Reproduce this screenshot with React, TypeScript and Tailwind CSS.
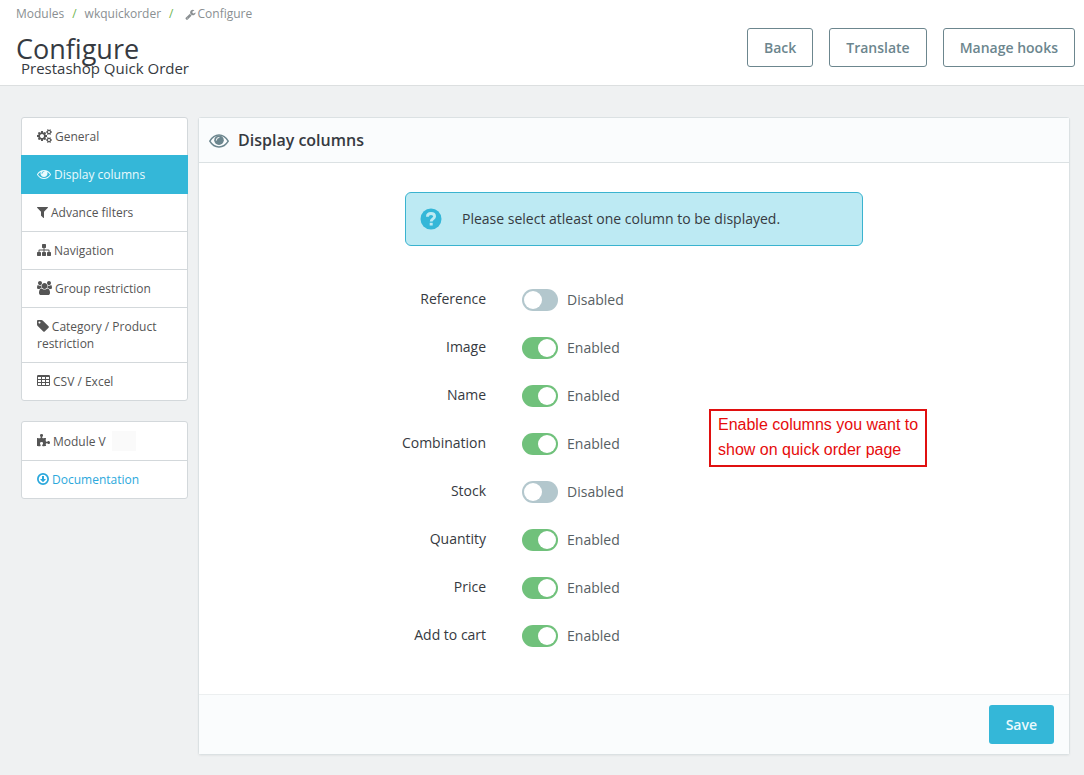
import React from "react";

type IconDef = { width: number; path: string };

const icons: Record<string, IconDef> = {
  wrench: {
    width: 1792,
    path: "M448 1472q0-26-19-45t-45-19-45 19-19 45 19 45 45 19 45-19 19-45zm644-420l-682 682q-37 37-90 37-52 0-91-37l-106-108q-38-36-38-90 0-53 38-91l681-681q39 98 114.5 173.5t173.5 114.5zm634-435q0 39-23 106-47 134-164.5 217.5t-258.5 83.5q-185 0-316.5-131.5t-131.5-316.5 131.5-316.5 316.5-131.5q58 0 121.5 16.5t107.5 46.5q16 11 16 28t-16 28l-293 169v224l193 107q5-3 79-48.5t135.5-81 70.5-35.5q15 0 23.5 10t8.5 25z",
  },
  cogs: {
    width: 1920,
    path: "M896 896q0-106-75-181t-181-75-181 75-75 181 75 181 181 75 181-75 75-181zm768 512q0-52-38-90t-90-38-90 38-38 90q0 53 37.5 90.5t90.5 37.5 90.5-37.5 37.5-90.5zm0-1024q0-52-38-90t-90-38-90 38-38 90q0 53 37.5 90.5t90.5 37.5 90.5-37.5 37.5-90.5zm-384 421v185q0 10-7 19.5t-16 10.5l-155 24q-11 35-32 76 34 48 90 115 7 11 7 20 0 12-7 19-23 30-82.5 89.5t-78.5 59.5q-11 0-21-7l-115-90q-37 19-77 31-11 108-23 155-7 24-30 24h-186q-11 0-20-7.5t-10-17.5l-23-153q-34-10-75-31l-118 89q-7 7-20 7-11 0-21-8-144-133-144-160 0-9 7-19 10-14 41-53t47-61q-23-44-35-82l-152-24q-10-1-17-9.5t-7-19.5v-185q0-10 7-19.5t16-10.5l155-24q11-35 32-76-34-48-90-115-7-11-7-20 0-12 7-20 22-30 82-89t79-59q11 0 21 7l115 90q34-18 77-32 11-108 23-154 7-24 30-24h186q11 0 20 7.5t10 17.5l23 153q34 10 75 31l118-89q8-7 20-7 11 0 21 8 144 133 144 160 0 8-7 19-12 16-42 54t-45 60q23 48 34 82l152 23q10 2 17 10.5t7 19.5zm640 533v140q0 16-149 31-12 27-30 52 51 113 51 138 0 4-4 7-122 71-124 71-8 0-46-47t-52-68q-20 2-30 2t-30-2q-14 21-52 68t-46 47q-2 0-124-71-4-3-4-7 0-25 51-138-18-25-30-52-149-15-149-31v-140q0-16 149-31 13-29 30-52-51-113-51-138 0-4 4-7 4-2 35-20t59-34 30-16q8 0 46 46.5t52 67.5q20-2 30-2t30 2q51-71 92-112l6-2q4 0 124 70 4 3 4 7 0 25-51 138 17 23 30 52 149 15 149 31zm0-1024v140q0 16-149 31-12 27-30 52 51 113 51 138 0 4-4 7-122 71-124 71-8 0-46-47t-52-68q-20 2-30 2t-30-2q-14 21-52 68t-46 47q-2 0-124-71-4-3-4-7 0-25 51-138-18-25-30-52-149-15-149-31v-140q0-16 149-31 13-29 30-52-51-113-51-138 0-4 4-7 4-2 35-20t59-34 30-16q8 0 46 46.5t52 67.5q20-2 30-2t30 2q51-71 92-112l6-2q4 0 124 70 4 3 4 7 0 25-51 138 17 23 30 52 149 15 149 31z",
  },
  eye: {
    width: 1792,
    path: "M1664 960q-152-236-381-353 61 104 61 225 0 185-131.5 316.5t-316.5 131.5-316.5-131.5-131.5-316.5q0-121 61-225-229 117-381 353 133 205 333.5 326.5t434.5 121.5 434.5-121.5 333.5-326.5zm-720-384q0-20-14-34t-34-14q-125 0-214.5 89.5t-89.5 214.5q0 20 14 34t34 14 34-14 14-34q0-86 61-147t147-61q20 0 34-14t14-34zm848 384q0 34-20 69-140 230-376.5 368.5t-499.5 138.5-499.5-139-376.5-368q-20-35-20-69t20-69q140-229 376.5-368t499.5-139 499.5 139 376.5 368q20 35 20 69z",
  },
  filter: {
    width: 1408,
    path: "M1403 295q17 41-14 70l-493 493v742q0 42-39 59-13 5-25 5-27 0-45-19l-256-256q-19-19-19-45v-486l-493-493q-31-29-14-70 17-39 59-39h1280q42 0 59 39z",
  },
  sitemap: {
    width: 1792,
    path: "M1792 1248v320q0 40-28 68t-68 28h-320q-40 0-68-28t-28-68v-320q0-40 28-68t68-28h96v-192h-512v192h96q40 0 68 28t28 68v320q0 40-28 68t-68 28h-320q-40 0-68-28t-28-68v-320q0-40 28-68t68-28h96v-192h-512v192h96q40 0 68 28t28 68v320q0 40-28 68t-68 28h-320q-40 0-68-28t-28-68v-320q0-40 28-68t68-28h96v-192q0-52 38-90t90-38h512v-192h-96q-40 0-68-28t-28-68v-320q0-40 28-68t68-28h320q40 0 68 28t28 68v320q0 40-28 68t-68 28h-96v192h512q52 0 90 38t38 90v192h96q40 0 68 28t28 68z",
  },
  group: {
    width: 1920,
    path: "M593 896q-162 5-265 128h-134q-82 0-138-40.5t-56-118.5q0-353 124-353 6 0 43.5 21t97.5 42.5 119 21.5q67 0 133-23-5 37-5 66 0 139 81 256zm1071 637q0 120-73 189.5t-194 69.5h-874q-121 0-194-69.5t-73-189.5q0-53 3.5-103.5t14-109 26.5-108.5 43-97.5 62-81 85.5-53.5 111.5-20q10 0 43 21.5t73 48 107 48 135 21.5 135-21.5 107-48 73-48 43-21.5q61 0 111.5 20t85.5 53.5 62 81 43 97.5 26.5 108.5 14 109 3.5 103.5zm-1024-1277q0 106-75 181t-181 75-181-75-75-181 75-181 181-75 181 75 75 181zm704 384q0 159-112.5 271.5t-271.5 112.5-271.5-112.5-112.5-271.5 112.5-271.5 271.5-112.5 271.5 112.5 112.5 271.5zm576 225q0 78-56 118.5t-138 40.5h-134q-103-123-265-128 81-117 81-256 0-29-5-66 66 23 133 23 59 0 119-21.5t97.5-42.5 43.5-21q124 0 124 353zm-128-609q0 106-75 181t-181 75-181-75-75-181 75-181 181-75 181 75 75 181z",
  },
  tag: {
    width: 1515,
    path: "M448 448q0-53-37.5-90.5t-90.5-37.5-90.5 37.5-37.5 90.5 37.5 90.5 90.5 37.5 90.5-37.5 37.5-90.5zm1067 576q0 53-37 90l-491 492q-39 37-91 37-53 0-90-37l-715-716q-38-37-64.5-101t-26.5-117v-416q0-52 38-90t90-38h416q53 0 117 26.5t102 64.5l715 714q37 39 37 91z",
  },
  table: {
    width: 1664,
    path: "M160 128h1344a160 160 0 0 1 160 160v1088a160 160 0 0 1-160 160H160a160 160 0 0 1-160-160V288a160 160 0 0 1 160-160zM128 384v256h384V384zM640 384v256h384V384zM1152 384v256h384V384zM128 768v256h384V768zM640 768v256h384V768zM1152 768v256h384V768zM128 1152v256h384v-256zM640 1152v256h384v-256zM1152 1152v256h384v-256z",
  },
  puzzle: {
    width: 1664,
    path: "M1664 1098q0 81-44.5 135t-123.5 54q-41 0-77.5-17.5t-59-38-56.5-38-71-17.5q-110 0-110 124 0 39 16 115t15 115v5q-22 0-33 1-34 3-97.5 11.5t-115.5 13.5-98 5q-61 0-103-26.5t-42-83.5q0-37 17.5-71t38-56.5 38-59 17.5-77.5q0-79-54-123.5t-135-44.5q-84 0-143 45.5t-59 127.5q0 43 15 83t33.5 64.5 33.5 53 15 50.5q0 45-46 89-37 35-117 35-95 0-245-24-9-2-27.5-4t-27.5-4l-13-2q-1 0-3-1-2 0-2-1v-1024q2 1 17.5 3.5t34 5 21.5 3.5q150 24 245 24 80 0 117-35 46-44 46-89 0-22-15-50.5t-33.5-53-33.5-64.5-15-83q0-82 59-127.5t144-45.5q80 0 134 44.5t54 123.5q0 41-17.5 77.5t-38 59-38 56.5-17.5 71q0 57 42 83.5t103 26.5q64 0 180-15t163-17v2q-1 2-3.5 17.5t-5 34-3.5 21.5q-24 150-24 245 0 80 35 117 44 46 89 46 22 0 50.5-15t53-33.5 64.5-33.5 83-15q82 0 127.5 59t45.5 143z",
  },
  download: {
    width: 1536,
    path: "M1120 928q0 12-10 24l-319 319q-11 9-23 9t-23-9l-320-320q-15-16-7-35 8-20 30-20h192v-352q0-14 9-23t23-9h192q14 0 23 9t9 23v352h192q14 0 23 9t9 23zM768 352a544 544 0 1 0 0 1088a544 544 0 1 0 0-1088zM768 128a768 768 0 1 1 0 1536a768 768 0 1 1 0-1536z",
  },
};

function Icon({ name, size = 14, className = "" }: { name: string; size?: number; className?: string }) {
  const icon = icons[name];
  return (
    <svg
      aria-hidden="true"
      viewBox={`0 0 ${icon.width} 1792`}
      height={size}
      width={(size * icon.width) / 1792}
      fill="currentColor"
      fillRule="evenodd"
      className={`inline-block ${className}`}
    >
      <path d={icon.path} />
    </svg>
  );
}

function EyeIcon() {
  return (
    <svg aria-hidden="true" viewBox="0 0 20 14" className="mt-0.5 h-3.5 w-5 text-[#6c868e]" fill="none">
      <path
        d="M.8 7.2C3 3.300 6.200 1 10 1s7 2.300 9.200 6.200C17 10.900 13.800 13 10 13S3 10.900.8 7.200z"
        stroke="currentColor"
        strokeWidth="1.500"
      />
      <circle cx="10" cy="6.200" r="4.800" fill="currentColor" />
      <path d="M7.300 6.200A2.700 2.700 0 0 1 10 3.400" stroke="#fafcfd" strokeWidth="1" strokeLinecap="round" />
    </svg>
  );
}

function HelpIcon() {
  return (
    <svg aria-hidden="true" viewBox="0 0 22 22" className="size-[22px]" fill="none">
      <circle cx="11" cy="11" r="10.500" fill="#34b7d8" />
      <path
        d="M7.400 8.700C7.400 6.600 9 5.500 11 5.500s3.600 1.200 3.600 3c0 2.300-3.400 2.500-3.400 5"
        stroke="#bdeaf3"
        strokeWidth="2.800"
      />
      <rect x="9.700" y="14.800" width="3" height="2.700" fill="#bdeaf3" />
    </svg>
  );
}

const menu = [
  { icon: "cogs", label: "General" },
  { icon: "eye", label: "Display columns", active: true },
  { icon: "filter", label: "Advance filters" },
  { icon: "sitemap", label: "Navigation", divided: true },
  { icon: "group", label: "Group restriction", divided: true },
  { icon: "tag", label: "Category / Product restriction", divided: true },
  { icon: "table", label: "CSV / Excel", divided: true },
];

const columns = [
  { id: "reference", label: "Reference", on: false },
  { id: "image", label: "Image", on: true },
  { id: "name", label: "Name", on: true },
  { id: "combination", label: "Combination", on: true },
  { id: "stock", label: "Stock", on: false },
  { id: "quantity", label: "Quantity", on: true },
  { id: "price", label: "Price", on: true },
  { id: "cart", label: "Add to cart", on: true },
];

function menuClass(active?: boolean, divided?: boolean) {
  if (active) return "-mx-px block bg-[#34b7d8] px-4 py-[11px] text-[#eafafd]";
  if (divided) return "block border-t border-[#d3d8db] px-[15px] py-2.5";
  return "block px-[15px] py-2.5";
}

function ColumnSwitch({ id, label, on }: { id: string; label: string; on: boolean }) {
  const [enabled, setEnabled] = React.useState(on);
  return (
    <div className="flex h-12 items-center">
      <label htmlFor={id} className="w-[33%] pb-0.5 text-right text-[#363a41]">
        {label}
      </label>
      <input
        id={id}
        type="checkbox"
        role="switch"
        checked={enabled}
        onChange={(e) => setEnabled(e.target.checked)}
        className="ml-9 h-[22px] w-9 appearance-none rounded-full bg-[#b3c7cd] p-0.5 before:block before:size-[18px] before:rounded-full before:bg-white checked:bg-[#70c17b] checked:before:ml-[14px]"
      />
      <span className="ml-[9px] text-[#576063]">{enabled ? "Enabled" : "Disabled"}</span>
    </div>
  );
}

export default function App() {
  const outline =
    "h-[39px] rounded-[3px] border border-[#6c868e] bg-white px-4 text-sm font-semibold text-[#6c868e]";
  return (
    <div className="min-h-screen bg-[#eff1f2] font-['Open_Sans','Noto_Sans',sans-serif] text-sm text-[#363a41]">
      <header className="flex h-[86px] justify-between border-b border-[#dcdfe0] bg-white pr-[9px] pl-4">
        <div>
          <nav aria-label="Breadcrumb" className="flex h-7 items-center gap-2 text-xs text-[#8a8f92]">
            <a href="#modules">Modules</a>
            <span className="text-[#70b550]">/</span>
            <a href="#wkquickorder">wkquickorder</a>
            <span className="text-[#70b550]">/</span>
            <a href="#configure" className="ml-[3px] flex items-center gap-0.5">
              <Icon name="wrench" size={11} />
              Configure
            </a>
          </nav>
          <h1 className="text-[27px] leading-[42px]">Configure</h1>
          <h2 className="-mt-2.5 ml-[5px] text-[15px] leading-4">Prestashop Quick Order</h2>
        </div>
        <div className="flex gap-4 pt-7">
          <button className={outline}>Back</button>
          <button className={outline}>Translate</button>
          <button className={outline}>Manage hooks</button>
        </div>
      </header>

      <div className="flex items-start gap-2.5 pt-[31px] pr-3.5 pb-5 pl-[21px]">
        <aside className="w-[167px] shrink-0 text-xs leading-[17px] text-[#555]">
          <nav className="rounded-[3px] border border-[#d3d8db] bg-white">
            {menu.map((m) => (
              <a key={m.label} href="#tab" className={menuClass(m.active, m.divided)}>
                <Icon name={m.icon} className="mr-[3px] -mt-1" />
                {m.label}
              </a>
            ))}
          </nav>
          <div className="mt-5 rounded-[3px] border border-[#d3d8db] bg-white">
            <div className="flex h-[38px] items-center px-[15px]">
              <Icon name="puzzle" className="mr-[3px]" />
              Module V
              <span className="ml-1.5 h-5 w-6 bg-[#fafafa]" />
            </div>
            <a
              href="#documentation"
              className="block border-t border-[#d3d8db] px-[15px] py-2.5 text-[#2ba8dc]"
            >
              <Icon name="download" className="mr-[3px] -mt-1" />
              Documentation
            </a>
          </div>
        </aside>

        <main className="relative min-w-0 flex-1 rounded-[3px] border border-[#dbe1e3] bg-white shadow-xs">
          <div className="flex h-[45px] items-center gap-[9px] border-b border-[#dbe1e3] bg-[#fafcfd] px-2.5">
            <EyeIcon />
            <h3 className="text-base font-semibold text-[#363a41]">Display columns</h3>
          </div>
          <form onSubmit={(e) => e.preventDefault()}>
            <div className="pt-[29px] pb-[34px]">
              <div className="mx-auto flex h-[54px] w-[458px] items-center gap-5 rounded-md border border-[#3ab3cf] bg-[#bdeaf3] px-3.5">
                <HelpIcon />
                <p>Please select atleast one column to be displayed.</p>
              </div>
              <div className="mt-[30px]">
                {columns.map((c) => (
                  <ColumnSwitch key={c.id} {...c} />
                ))}
              </div>
            </div>
            <div className="flex h-[60px] items-center justify-end border-t border-[#eceff0] bg-[#fafcfd] px-[15px]">
              <button
                type="submit"
                className="h-[39px] rounded-[3px] bg-[#34b7d8] px-[17px] text-sm font-semibold text-[#eafafd]"
              >
                Save
              </button>
            </div>
          </form>
          <p className="absolute top-[291px] left-[510px] w-[218px] border-2 border-[#e01010] bg-white pt-px pb-[3px] pl-[7px] font-['Liberation_Sans',Arial,sans-serif] text-base leading-[25px] text-[#e60c0c]">
            Enable columns you want to show on quick order page
          </p>
        </main>
      </div>
    </div>
  );
}
